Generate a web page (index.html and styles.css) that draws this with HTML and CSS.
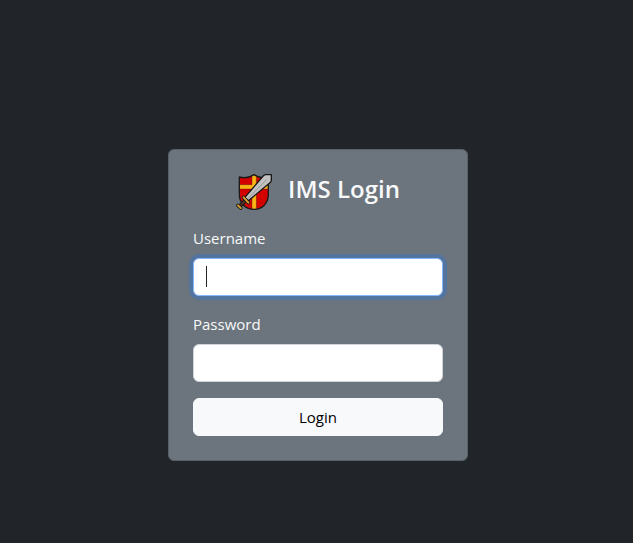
FILE: index.html
```html
<!DOCTYPE html>
<html lang="en">
<head>
  <meta charset="utf-8">
  <meta name="viewport" content="width=device-width, initial-scale=1">
  <title>IMS Login</title>
  <link rel="stylesheet" href="styles.css">
</head>
<body>
  <main class="page">
    <form class="card">
      <header class="brand">
        <svg class="logo" viewBox="0 0 108 108" aria-hidden="true">
          <path d="M10 9Q34 16 54 2Q74 16 97 9V61C97 88 79 106 54 106C29 106 10 88 10 61Z" fill="#d40000"/>
          <path d="M10 32H48V5L54 1L61 5V32H97V45H61V106H48V45H10Z" fill="#ffb414" stroke="#1d1a1a" stroke-width="1"/>
          <path d="M10 9Q34 16 54 2Q74 16 97 9V61C97 88 79 106 54 106C29 106 10 88 10 61Z" fill="none" stroke="#1d1a1a" stroke-width="4" stroke-linejoin="round"/>
          <path d="M26 71L80 8Q84 2 89 2H106V19Q106 23 100 28L37 80Z" fill="#c2c2c2" stroke="#171717" stroke-width="4" stroke-linejoin="round"/>
          <path d="M36 73L92 17" fill="none" stroke="#929292" stroke-width="3"/>
          <path d="M28 79L12 96" fill="none" stroke="#171717" stroke-width="12"/>
          <path d="M27 80L14 94" fill="none" stroke="#5b3528" stroke-width="5"/>
          <path d="M23 70L37 86" fill="none" stroke="#171717" stroke-width="11" stroke-linecap="round"/>
          <path d="M23 70L37 86" fill="none" stroke="#d99b2b" stroke-width="6" stroke-linecap="round"/>
          <path d="M6 94L14 102" fill="none" stroke="#171717" stroke-width="11" stroke-linecap="round"/>
          <path d="M6 94L14 102" fill="none" stroke="#d99b2b" stroke-width="6" stroke-linecap="round"/>
        </svg>
        <h1 class="title">IMS Login</h1>
      </header>
      <div class="field">
        <label class="label" for="username">Username</label>
        <input class="input" id="username" name="username" type="text" autofocus>
      </div>
      <div class="field">
        <label class="label" for="password">Password</label>
        <input class="input" id="password" name="password" type="password">
      </div>
      <button class="button" type="submit">Login</button>
    </form>
  </main>
</body>
</html>
```
FILE: styles.css
```css
* {
  box-sizing: border-box;
}

body {
  margin: 0;
  background: #212529;
  color: #f8f9fa;
  font-family: "Segoe UI", "Open Sans", "Noto Sans", sans-serif;
  font-size: 15px;
  line-height: 24px;
}

.page {
  display: flex;
  justify-content: center;
  padding: 149px 16px 32px 19px;
}

.card {
  width: 100%;
  max-width: 300px;
  padding: 24px;
  background: #6c757d;
  border: 1px solid #596168;
  border-radius: 6px;
}

.brand {
  display: flex;
  align-items: flex-start;
  justify-content: center;
  gap: 16px;
  margin-bottom: 16px;
}

.logo {
  width: 36px;
  height: 36px;
  overflow: visible;
}

.title {
  margin: 0;
  font-size: 24px;
  font-weight: 600;
  line-height: 30px;
}

.field {
  margin-bottom: 16px;
}

.label {
  display: block;
  margin-bottom: 8px;
}

.input {
  display: block;
  width: 100%;
  height: 38px;
  padding: 6px 12px;
  background-color: #fff;
  border: 1px solid #ced4da;
  border-radius: 6px;
  color: #212529;
  font: inherit;
}

.input:focus {
  border-color: #86b7fe;
  outline: 0;
  box-shadow: 0 0 0 4px #52749f;
}

#username:focus {
  caret-color: transparent;
  background-image: linear-gradient(#212529, #212529);
  background-repeat: no-repeat;
  background-position: 12px 7px;
  background-size: 1px 21px;
}

.button {
  display: block;
  width: 100%;
  height: 38px;
  padding: 6px 12px;
  background: #f8f9fa;
  border: 1px solid #f8f9fa;
  border-radius: 6px;
  color: #000;
  font: inherit;
}
```
